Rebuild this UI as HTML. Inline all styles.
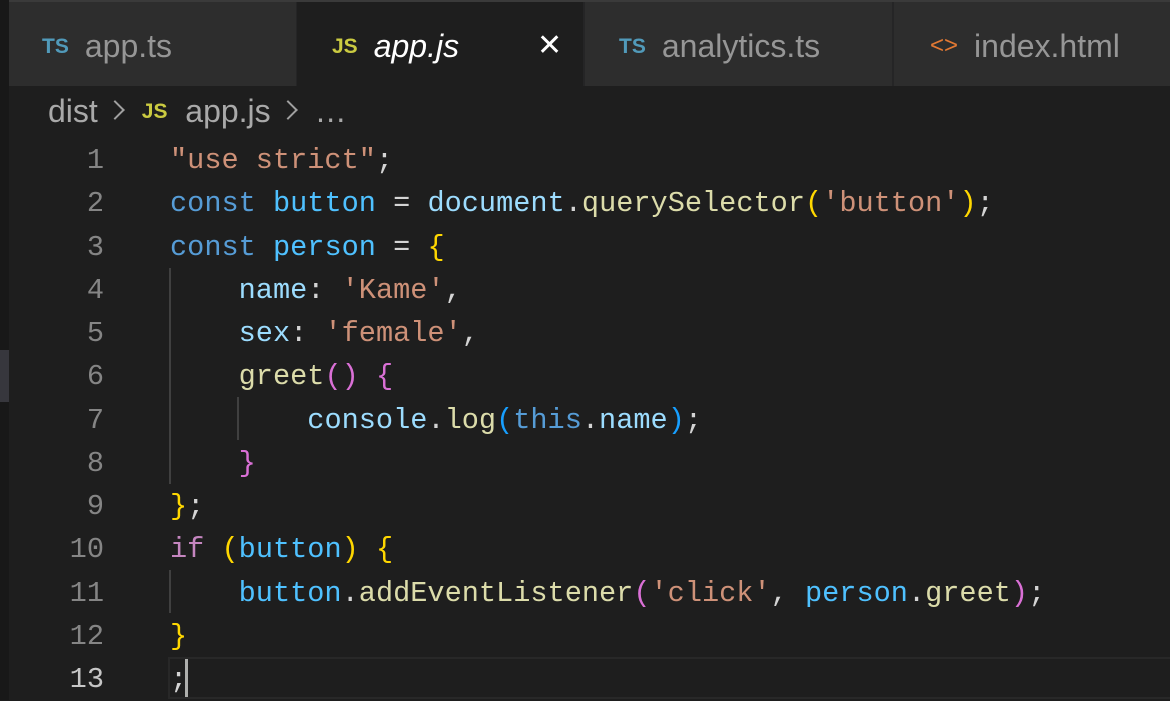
<!DOCTYPE html>
<html><head><meta charset="utf-8"><style>
*{margin:0;padding:0;box-sizing:border-box}
body{width:1170px;height:700px;background:#1e1e1e;overflow:hidden;position:relative;font-family:"Liberation Sans",sans-serif}
.strip{position:absolute;left:0;top:0;width:9px;height:700px;background:#181818}
.strip .b{position:absolute;left:0;top:350px;width:9px;height:52px;background:#37373d}
.tabs{position:absolute;left:9px;top:0;width:1161px;height:86px;background:#252526;border-top:2px solid #3a3a3a}
.tab{position:absolute;top:0;height:84px;background:#2d2d2d;font-size:32px;color:#969696;line-height:88px;white-space:nowrap}
.tab .i{font-weight:bold;font-size:21px;margin-right:16px;vertical-align:4px}
.ts{color:#519aba}.js{color:#cbcb41}
.act{background:#1e1e1e;color:#fff;font-style:italic}
.bc{position:absolute;left:48px;top:93px;font-size:32px;color:#a9a9a9;white-space:nowrap}
.chev{display:inline-block;width:14px;height:14px;border-top:2px solid #a0a0a0;border-right:2px solid #a0a0a0;transform:rotate(45deg);margin:0 20px 0 10px;vertical-align:5px}
.code{position:absolute;left:0;top:139px;font-family:"Liberation Mono",monospace;font-size:28.6px;white-space:pre}
.ln{position:absolute;height:43.25px;line-height:43.25px}
.num{position:absolute;width:104px;text-align:right;left:0;color:#858585}
.tx{position:absolute;left:170px}
.s{color:#ce9178}.k{color:#569cd6}.c{color:#4fc1ff}.v{color:#9cdcfe}.f{color:#dcdcaa}.y{color:#ffd700}.p{color:#da70d6}.bl{color:#179fff}.pk{color:#c586c0}.w{color:#d4d4d4}
.g{position:absolute;width:2px;background:#404040}
</style></head><body>
<div class="strip"><div class="b"></div></div>
<div class="tabs">
<div class="tab" style="left:0;width:287px;padding-left:33px"><span class="i ts">TS</span>app.ts</div>
<div class="tab act" style="left:288px;width:286px;padding-left:35px"><span class="i js" style="font-style:normal">JS</span>app.js<span style="position:absolute;left:240px;top:0;font-style:normal;font-size:30px">✕</span></div>
<div class="tab" style="left:576px;width:307px;padding-left:34px"><span class="i ts">TS</span>analytics.ts</div>
<div class="tab" style="left:885px;width:276px;padding-left:36px"><span class="i" style="color:#e37933;font-weight:normal;font-size:24px">&lt;&gt;</span>index.html</div>
</div>
<div class="bc">dist<span class="chev"></span><span class="js" style="font-weight:bold;font-size:21px;vertical-align:4px">JS</span>&nbsp; app.js<span class="chev"></span>…</div>
<div style="position:absolute;left:168px;top:657px;width:1002px;height:42px;border:2px solid #282828;border-right:none"></div>
<div class="g" style="left:169px;top:268px;height:216px"></div>
<div class="g" style="left:237px;top:397px;height:43px"></div>
<div class="g" style="left:169px;top:570px;height:43px"></div>
<div style="position:absolute;left:185px;top:659px;width:3px;height:38px;background:#aeafad"></div>
<div class="code">
<div class="ln" style="top:0"><span class="num">1</span><span class="tx"><span class="s">"use strict"</span><span class="w">;</span></span></div>
<div class="ln" style="top:43.25px"><span class="num">2</span><span class="tx"><span class="k">const</span> <span class="c">button</span> <span class="w">=</span> <span class="v">document</span><span class="w">.</span><span class="f">querySelector</span><span class="y">(</span><span class="s">'button'</span><span class="y">)</span><span class="w">;</span></span></div>
<div class="ln" style="top:86.5px"><span class="num">3</span><span class="tx"><span class="k">const</span> <span class="c">person</span> <span class="w">=</span> <span class="y">{</span></span></div>
<div class="ln" style="top:129.75px"><span class="num">4</span><span class="tx">    <span class="v">name</span><span class="w">:</span> <span class="s">'Kame'</span><span class="w">,</span></span></div>
<div class="ln" style="top:173px"><span class="num">5</span><span class="tx">    <span class="v">sex</span><span class="w">:</span> <span class="s">'female'</span><span class="w">,</span></span></div>
<div class="ln" style="top:216.25px"><span class="num">6</span><span class="tx">    <span class="f">greet</span><span class="p">()</span> <span class="p">{</span></span></div>
<div class="ln" style="top:259.5px"><span class="num">7</span><span class="tx">        <span class="v">console</span><span class="w">.</span><span class="f">log</span><span class="bl">(</span><span class="k">this</span><span class="w">.</span><span class="v">name</span><span class="bl">)</span><span class="w">;</span></span></div>
<div class="ln" style="top:302.75px"><span class="num">8</span><span class="tx">    <span class="p">}</span></span></div>
<div class="ln" style="top:346px"><span class="num">9</span><span class="tx"><span class="y">}</span><span class="w">;</span></span></div>
<div class="ln" style="top:389.25px"><span class="num">10</span><span class="tx"><span class="pk">if</span> <span class="y">(</span><span class="c">button</span><span class="y">)</span> <span class="y">{</span></span></div>
<div class="ln" style="top:432.5px"><span class="num">11</span><span class="tx">    <span class="c">button</span><span class="w">.</span><span class="f">addEventListener</span><span class="p">(</span><span class="s">'click'</span><span class="w">,</span> <span class="c">person</span><span class="w">.</span><span class="f">greet</span><span class="p">)</span><span class="w">;</span></span></div>
<div class="ln" style="top:475.75px"><span class="num">12</span><span class="tx"><span class="y">}</span></span></div>
<div class="ln" style="top:519px"><span class="num" style="color:#c6c6c6">13</span><span class="tx"><span class="w">;</span></span></div>
</div>
</body></html>
